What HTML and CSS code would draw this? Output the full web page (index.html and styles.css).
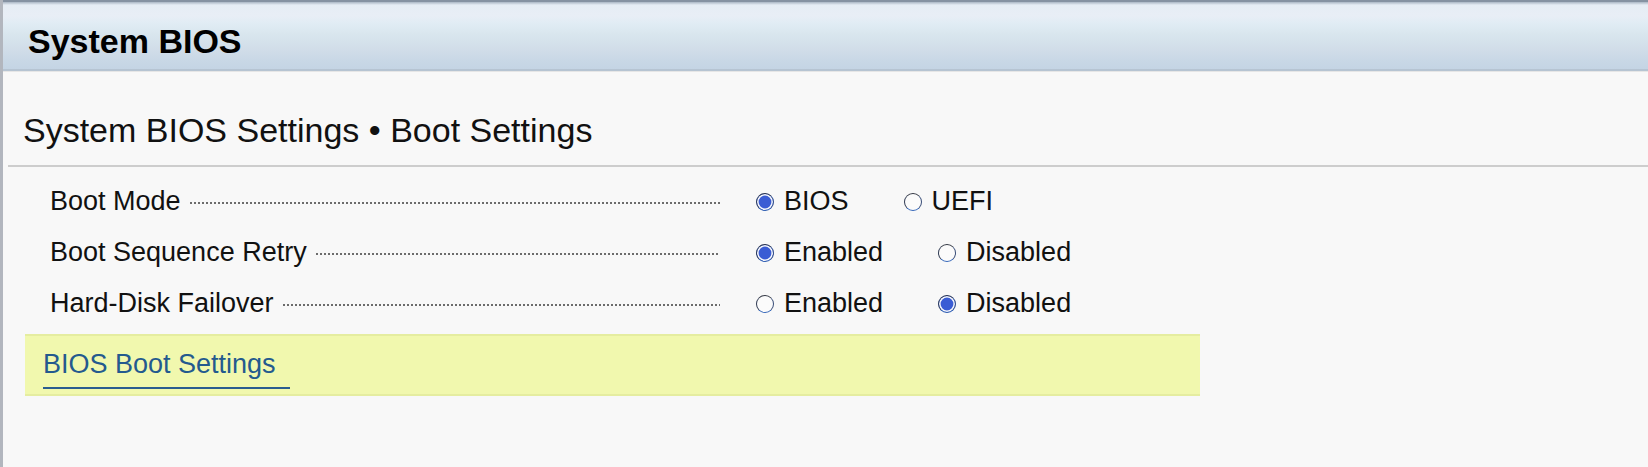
FILE: index.html
```html
<!DOCTYPE html>
<html lang="en">
<head>
<meta charset="utf-8">
<title>System BIOS</title>
<link rel="stylesheet" href="styles.css">
</head>
<body>
<div class="frame">
  <header class="titlebar">
    <h1 class="title">System BIOS</h1>
  </header>
  <section class="page">
    <h2 class="crumb">System BIOS Settings • Boot Settings</h2>
    <div class="rule"></div>
    <div class="rows">
      <div class="row">
        <div class="field"><span class="label">Boot Mode</span><span class="leader"></span></div>
        <div class="opts">
          <label class="opt"><span class="radio on"></span>BIOS</label>
          <label class="opt"><span class="radio"></span>UEFI</label>
        </div>
      </div>
      <div class="row">
        <div class="field"><span class="label">Boot Sequence Retry</span><span class="leader"></span></div>
        <div class="opts">
          <label class="opt"><span class="radio on"></span>Enabled</label>
          <label class="opt"><span class="radio"></span>Disabled</label>
        </div>
      </div>
      <div class="row">
        <div class="field"><span class="label">Hard-Disk Failover</span><span class="leader"></span></div>
        <div class="opts">
          <label class="opt"><span class="radio"></span>Enabled</label>
          <label class="opt"><span class="radio on"></span>Disabled</label>
        </div>
      </div>
    </div>
    <div class="linkbox"><a class="link">BIOS Boot Settings</a></div>
  </section>
</div>
</body>
</html>
```
FILE: styles.css
```css
html, body {
  margin: 0;
  padding: 0;
  background: #f8f8f8;
}
body {
  font-family: "Liberation Sans", Arial, sans-serif;
  color: #111;
  width: 1648px;
  height: 467px;
  overflow: hidden;
}
.frame {
  height: 467px;
  border-left: 3px solid #b2b6be;
  box-sizing: border-box;
}
.titlebar {
  height: 71px;
  box-sizing: border-box;
  border-top: 2px solid #8592a2;
  border-bottom: 2px solid #b6c4d2;
  background: linear-gradient(to bottom,
    #aab6c4 0px, #e6edf5 3px, #e8eef6 14px, #e0ecf4 22px,
    #d9e6ee 32px, #d2dee9 46px, #c9d8e6 58px, #c4d4e4 67px);
  padding: 20px 0 0 25px;
  box-shadow: 0 1px 0 #e6e6e6;
}
.title {
  margin: 0;
  font-size: 34px;
  line-height: 38px;
  font-weight: bold;
  color: #000;
}
.page {
  padding-top: 40px;
}
.crumb {
  margin: 0;
  padding-left: 20px;
  font-size: 34px;
  line-height: 38px;
  font-weight: normal;
  color: #111;
}
.rule {
  margin: 16px 0 0 5px;
  height: 2px;
  background: #cdcdcd;
}
.rows {
  margin-top: 9px;
  padding-left: 47px;
}
.row {
  display: flex;
  align-items: center;
  height: 50px;
  font-size: 27px;
  line-height: 30px;
}
.row + .row {
  margin-top: 1px;
}
.field {
  width: 670px;
  display: flex;
  align-items: center;
}
.label {
  white-space: nowrap;
}
.leader {
  flex: 1;
  height: 2px;
  margin: 4px 0 0 9px;
  background-image: linear-gradient(to right, #6c6c6c 0, #6c6c6c 2px, transparent 2px);
  background-size: 4px 2px;
  background-repeat: repeat-x;
}
.opts {
  display: flex;
  align-items: center;
  margin-left: 36px;
  gap: 55px;
}
.opt {
  display: flex;
  align-items: center;
  gap: 10px;
}
.radio {
  width: 18px;
  height: 18px;
  box-sizing: border-box;
  border-radius: 50%;
  border: 1.5px solid;
  border-color: #2f3440 #3a4e78 #3365b8 #2f3a52;
  background: #fbfbfb;
  margin-top: 1px;
}
.radio.on {
  background: #3a5cd4;
  box-shadow: inset 0 0 0 1.6px #f4f6fb;
  border-color: #28324a #34508a #3160b0 #2b3a5c;
}
.linkbox {
  margin: 6px 0 0 22px;
  width: 1175px;
  height: 62px;
  box-sizing: border-box;
  background: #f1f8ae;
  border-top: 2px solid #e5eda0;
  border-bottom: 2px solid #e5eda0;
  padding: 13px 0 0 18px;
}
.link {
  display: inline-block;
  font-size: 27px;
  line-height: 30px;
  color: #245a8e;
  padding: 0 14px 8px 0;
  border-bottom: 2px solid #2b5d8f;
  text-decoration: none;
}
```
